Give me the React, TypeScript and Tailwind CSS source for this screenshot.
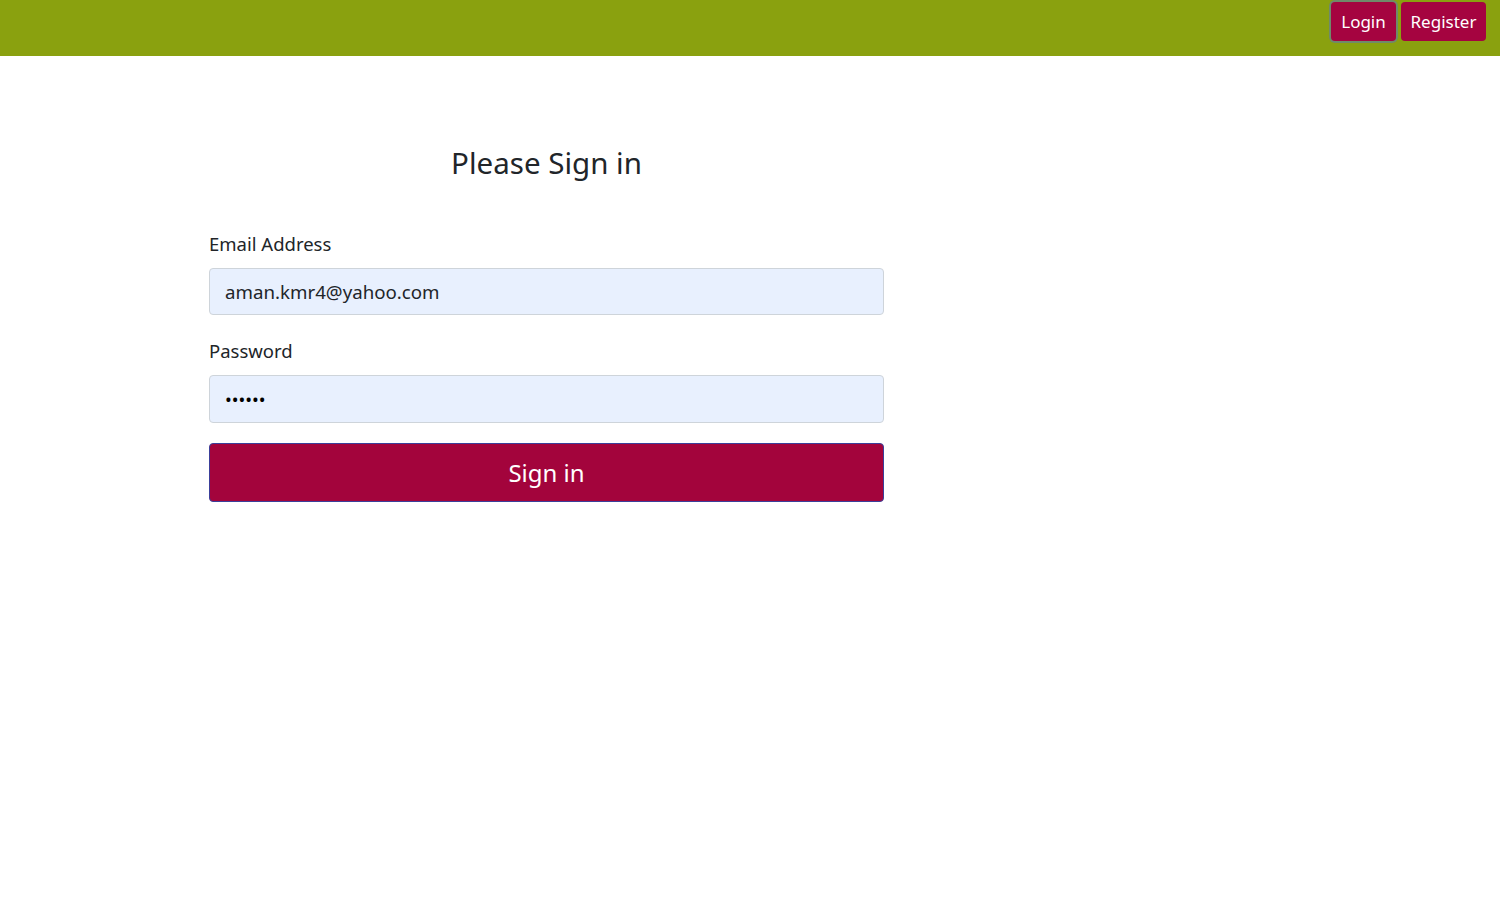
import React from 'react';

const App: React.FC = () => {
  return (
    <div className="min-h-screen bg-white" style={{ fontFamily: '"Noto Sans", "Open Sans", sans-serif' }}>
      <nav className="h-14 bg-[#8aa10f] flex items-start justify-end pt-[2px] pr-[14px] gap-[5px]">
        <button className="h-[39px] w-[65px] rounded-[4px] bg-[#a50440] text-white text-[17px] ring-[2px] ring-[#6f8a6a]">
          Login
        </button>
        <button className="h-[39px] w-[85px] rounded-[4px] bg-[#a50440] text-white text-[17px]">
          Register
        </button>
      </nav>

      <div className="pl-[209px] pt-[84px]">
        <form className="w-[675px]" onSubmit={(e) => e.preventDefault()}>
          <h1 className="text-center text-[29.5px] text-[#212529] leading-[46px]">Please Sign in</h1>

          <div className="mt-[45px]">
            <label className="block text-[18.5px] text-[#212529] leading-[26px] mb-[11px]">Email Address</label>
            <input
              type="email"
              defaultValue="aman.kmr4@yahoo.com"
              className="w-full h-[47px] px-[15px] rounded-[4px] border border-[#ced4da] bg-[#e8f0fe] text-[18.7px] text-[#212529] outline-none"
            />
          </div>

          <div className="mt-[23px]">
            <label className="block text-[18.5px] text-[#212529] leading-[26px] mb-[11px]">Password</label>
            <input
              type="password"
              defaultValue="123456"
              className="w-full h-[48px] px-[15px] rounded-[4px] border border-[#ced4da] bg-[#e8f0fe] text-[18px] text-black outline-none"
            />
          </div>

          <button
            type="submit"
            className="mt-[20px] w-full h-[59px] rounded-[4px] border border-[#3b3f9a] bg-[#a3043c] text-white text-[24px]"
          >
            Sign in
          </button>
        </form>
      </div>
    </div>
  );
};

export default App;
